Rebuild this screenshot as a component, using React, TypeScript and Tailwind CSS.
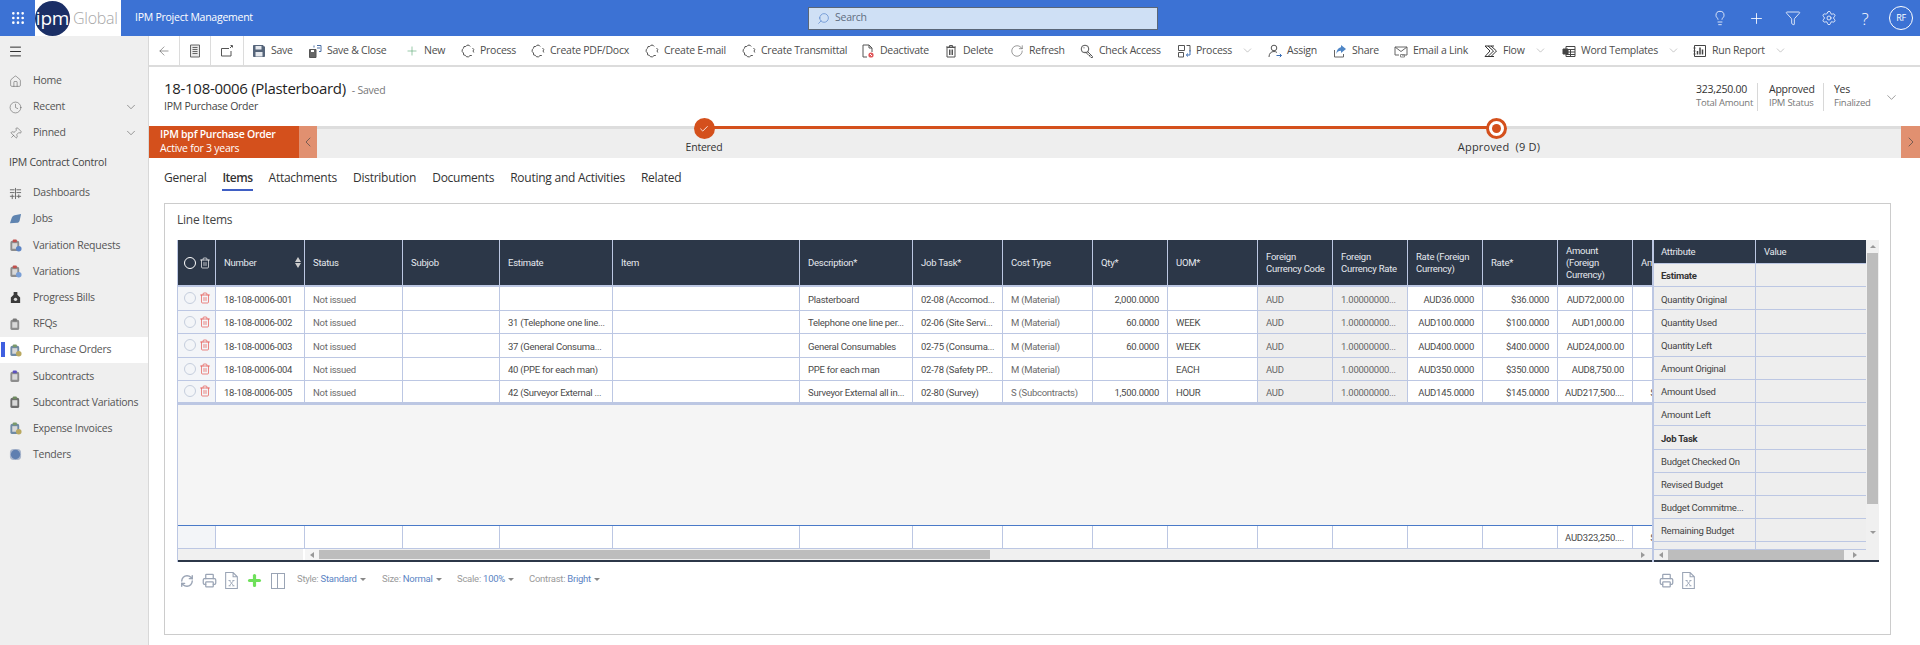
import type { ReactNode } from "react"
import {
  ArrowLeft,
  ChevronDown,
  ChevronLeft,
  ChevronRight,
  Check,
  Clock,
  Filter,
  Home,
  Lightbulb,
  Menu,
  Pin,
  Plus,
  Printer,
  RefreshCw,
  RotateCw,
  Search,
  Settings,
  Trash2,
  Grip,
} from "lucide-react"

const segoe = "[font-family:'Open_Sans',sans-serif]"
const gridFont = "[font-family:'Roboto',sans-serif]"

const Svg = ({ children, className = "" }: { children: ReactNode; className?: string }) => (
  <svg viewBox="0 0 14 14" fill="none" stroke="currentColor" strokeWidth="1" className={`h-[14px] w-[14px] shrink-0 ${className}`}>
    {children}
  </svg>
)

const SaveIcon = () => (
  <Svg className="text-[#56657a]">
    <path d="M1.500 1.500h9.500l1.500 1.500v9.500h-11z" fill="#56657a" />
    <path d="M3.500 2h6v3.500h-6zM3.500 8h7v4.500h-7z" fill="#e6e9ee" stroke="none" />
  </Svg>
)

const ProcessIcon = () => (
  <Svg className="text-[#555]">
    <path d="M9.200 2.500 8 1.200H6L4.800 2.500H3L2.500 4.300 1.200 5.600V7.600L2.500 9V10.800L4.300 11.300 5.600 12.800H7.600L9 11.500H10.800" />
    <path d="M11.500 4 12.800 5.600 12 7 12.800 8.500" />
  </Svg>
)

const SaveCloseIcon = () => (
  <Svg className="text-[#555]">
    <path d="M1.500 5.500h6.500v8h-6.500z" fill="#666" />
    <path d="M3 6h3v2H3z" fill="#fff" stroke="none" />
    <path d="M9 1.500h4v6h-2M9 4h3M6 1.500v2" stroke="#4a6fa5" />
  </Svg>
)

const FormIcon = () => (
  <Svg className="text-[#666]">
    <path d="M2.500 1h9v12h-9z" fill="#e8e8e8" />
    <path d="M4.500 3.500h5M4.500 5.500h5M4.500 7.500h5M4.500 9.500h5" />
  </Svg>
)

const PopoutIcon = () => (
  <Svg className="text-[#555]">
    <path d="M9 4.500H1.500v7.500h9.500V7" />
    <path d="M10 4l2-2M10.500 1.500h2v2" />
  </Svg>
)

const DeactivateIcon = () => (
  <Svg className="text-[#555]">
    <path d="M6 13H2V1h6l3 3v4M8 1v3h3" />
    <circle cx="10" cy="11" r="2.600" fill="#e0565a" stroke="none" />
    <path d="M9 10l2 2" stroke="#fff" />
  </Svg>
)

const BinIcon = () => (
  <Svg className="text-[#555]">
    <path d="M3 3.500h8V13H3zM2 3h10M5.500 3V1.500h3V3M5.500 5.500v5.500M7 5.500v5.500M8.500 5.500v5.500" />
  </Svg>
)

const KeyIcon = () => (
  <Svg className="text-[#555]">
    <circle cx="5" cy="5" r="3.800" />
    <path d="M7.500 7.500l5 5v1h-1.500l-1-1v-1h-1l-3.800-3.800M3.500 3.800h1" />
  </Svg>
)

const SwitchIcon = () => (
  <Svg className="text-[#555]">
    <path d="M1.500 1.500h6v5h-6zM1.500 8.500h5v4.500h-5z" />
    <path d="M9.500 1.500h3.500v6" stroke="#555" />
    <path d="M13 6v5H9.500M11 9.500 9.300 11 11 12.500" stroke="#3d6fb5" />
  </Svg>
)

const AssignIcon = () => (
  <Svg className="text-[#555]">
    <circle cx="6" cy="4" r="2.800" />
    <path d="M1 13c0-3.500 2-5.500 5-5.500 1.200 0 2.200.3 3 1" />
    <path d="M8.500 11.500h5M11.800 9.800l1.700 1.700-1.700 1.700" stroke="#3d6fb5" />
  </Svg>
)

const ShareIcon = () => (
  <Svg className="text-[#666]">
    <path d="M1.500 6v7h9V10" />
    <path d="M8 1l5 4-5 4V6.800C5.500 6.800 4 8 3.500 10 3.500 6 5.500 3.500 8 3.200z" fill="#4f86c6" stroke="none" />
  </Svg>
)

const MailLinkIcon = () => (
  <Svg className="text-[#666]">
    <path d="M1 3h12v8H8M1 3v8h4M1 3l6 4.500L13 3" />
    <path d="M6.500 10.500h4v2.500h-4z" stroke="#888" />
  </Svg>
)

const FlowIcon = () => (
  <Svg className="text-[#333]">
    <path d="M1 2h6l5.500 5L7 12.500H1l5-5.500zM4 2l5.500 5L4 12.500" />
    <path d="M7 2h3M7 12.500h3" />
  </Svg>
)

const WordIcon = () => (
  <Svg className="text-[#444]">
    <path d="M4 2.500h9v10H4zM4 5.500h9M4 8h9M4 10.500h9M8.500 5.500v7" />
    <path d="M1 5h5v5H1z" fill="#444" />
  </Svg>
)

const ReportIcon = () => (
  <Svg className="text-[#444]">
    <path d="M1.500 1.500h11v11h-11z" />
    <path d="M4.500 10.500V7M7 10.500V3.500M9.500 10.500V5.500" strokeWidth="1.500" />
    <path d="M0.500 4h2M0.500 7h2M0.500 10h2" />
  </Svg>
)

const ExcelIcon = () => (
  <svg viewBox="0 0 12 16" fill="none" stroke="#9aa4b5" className="h-[17px] w-[13px]">
    <path d="M.5.5h7l4 4v11H.5zM7.500.5v4h4" />
    <path d="M4 8l4 5M8 8l-4 5M3.200 13h2M6.800 13h2M3.200 8h2M6.800 8h2" strokeWidth=".8" />
  </svg>
)

const tools: { label: string; icon: ReactNode; w: string; caret?: boolean }[] = [
  { label: "Save", icon: <SaveIcon />, w: "w-[56px]" },
  { label: "Save & Close", icon: <SaveCloseIcon />, w: "w-[97px]" },
  { label: "New", icon: <Plus className="h-[14px] w-[14px] shrink-0 text-[#4fa36a]" strokeWidth={1} />, w: "w-[56px]" },
  { label: "Process", icon: <ProcessIcon />, w: "w-[70px]" },
  { label: "Create PDF/Docx", icon: <ProcessIcon />, w: "w-[114px]" },
  { label: "Create E-mail", icon: <ProcessIcon />, w: "w-[97px]" },
  { label: "Create Transmittal", icon: <ProcessIcon />, w: "w-[119px]" },
  { label: "Deactivate", icon: <DeactivateIcon />, w: "w-[83px]" },
  { label: "Delete", icon: <BinIcon />, w: "w-[66px]" },
  { label: "Refresh", icon: <RotateCw className="h-[14px] w-[14px] shrink-0 text-[#555]" strokeWidth={1} />, w: "w-[70px]" },
  { label: "Check Access", icon: <KeyIcon />, w: "w-[97px]" },
  { label: "Process", icon: <SwitchIcon />, w: "w-[91px]", caret: true },
  { label: "Assign", icon: <AssignIcon />, w: "w-[65px]" },
  { label: "Share", icon: <ShareIcon />, w: "w-[61px]" },
  { label: "Email a Link", icon: <MailLinkIcon />, w: "w-[90px]" },
  { label: "Flow", icon: <FlowIcon />, w: "w-[78px]", caret: true },
  { label: "Word Templates", icon: <WordIcon />, w: "w-[131px]", caret: true },
  { label: "Run Report", icon: <ReportIcon />, w: "w-[100px]", caret: true },
]

const Clip = ({ clip = "#c0504d", badge, body = "#8d8d8d" }: { clip?: string; badge?: string; body?: string }) => (
  <svg viewBox="0 0 14 14" className="h-[13px] w-[13px] shrink-0">
    <rect x="1.500" y="2" width="9.500" height="11" rx="2" fill={body} />
    <rect x="3.500" y="4.500" width="5.500" height="6" fill="#d8d8d8" />
    <rect x="4" y="0.500" width="4.500" height="3" rx="1" fill={clip} />
    {badge && <circle cx="10.500" cy="10.500" r="3" fill={badge} />}
  </svg>
)

const navItems: { label: string; icon: ReactNode; active?: boolean }[] = [
  {
    label: "Dashboards",
    icon: (
      <svg viewBox="0 0 14 14" stroke="#666" className="h-[13px] w-[13px] shrink-0">
        <path d="M1 3h5M1 6h5M8 3h5M8 6h5M1 10h5M8 10h5M7 1v12M3.500 8v5M10.500 8v4" />
      </svg>
    ),
  },
  {
    label: "Jobs",
    icon: (
      <svg viewBox="0 0 14 14" className="h-[13px] w-[13px] shrink-0">
        <path d="M1 11 3 5q1-2 3-2.500L13 1l-1.500 7q-.5 2-2 2.500z" fill="#5f84b0" />
      </svg>
    ),
  },
  { label: "Variation Requests", icon: <Clip badge="#5c84c4" /> },
  { label: "Variations", icon: <Clip badge="#7a9fd6" /> },
  {
    label: "Progress Bills",
    icon: (
      <svg viewBox="0 0 14 14" className="h-[13px] w-[13px] shrink-0">
        <path d="M5 1h4v3l3 3v6H2V7l3-3z" fill="#3a3a3a" />
        <circle cx="7" cy="9" r="1.800" fill="#ddd" />
      </svg>
    ),
  },
  { label: "RFQs", icon: <Clip clip="#777" /> },
  { label: "Purchase Orders", icon: <Clip clip="#7a9a6a" badge="#b9a860" body="#6f8aa5" />, active: true },
  { label: "Subcontracts", icon: <Clip clip="#5b50c0" /> },
  { label: "Subcontract Variations", icon: <Clip clip="#6f8a60" body="#6d6d6d" /> },
  { label: "Expense Invoices", icon: <Clip clip="#7a9a6a" badge="#b9a860" body="#6f8aa5" /> },
  {
    label: "Tenders",
    icon: (
      <svg viewBox="0 0 14 14" className="h-[13px] w-[13px] shrink-0">
        <rect x="1" y="1" width="12" height="12" rx="4" fill="#a9b6cc" />
        <circle cx="7" cy="7" r="5" fill="#5f7fb0" />
      </svg>
    ),
  },
]

const gridCols =
  "grid w-max grid-cols-[38px_89px_98px_97px_113px_187px_113px_90px_90px_75px_90px_75px_75px_75px_75px_75px_76px]"

const headers = [
  "Number",
  "Status",
  "Subjob",
  "Estimate",
  "Item",
  "Description*",
  "Job Task*",
  "Cost Type",
  "Qty*",
  "UOM*",
  "Foreign\nCurrency Code",
  "Foreign\nCurrency Rate",
  "Rate (Foreign\nCurrency)",
  "Rate*",
  "Amount\n(Foreign\nCurrency)",
  "Amount",
]

const rows = [
  ["18-108-0006-001", "Not issued", "", "", "", "Plasterboard", "02-08 (Accomod...", "M (Material)", "2,000.0000", "", "AUD", "1.00000000...", "AUD36.0000", "$36.0000", "AUD72,000.00", ""],
  ["18-108-0006-002", "Not issued", "", "31 (Telephone one line...", "", "Telephone one line per...", "02-06 (Site Servi...", "M (Material)", "60.0000", "WEEK", "AUD", "1.00000000...", "AUD100.0000", "$100.0000", "AUD1,000.00", ""],
  ["18-108-0006-003", "Not issued", "", "37 (General Consuma...", "", "General Consumables", "02-75 (Consuma...", "M (Material)", "60.0000", "WEEK", "AUD", "1.00000000...", "AUD400.0000", "$400.0000", "AUD24,000.00", ""],
  ["18-108-0006-004", "Not issued", "", "40 (PPE for each man)", "", "PPE for each man", "02-78 (Safety PP...", "M (Material)", "", "EACH", "AUD", "1.00000000...", "AUD350.0000", "$350.0000", "AUD8,750.00", ""],
  ["18-108-0006-005", "Not issued", "", "42 (Surveyor External ...", "", "Surveyor External all in...", "02-80 (Survey)", "S (Subcontracts)", "1,500.0000", "HOUR", "AUD", "1.00000000...", "AUD145.0000", "$145.0000", "AUD217,500....", "$217,500.00"],
]

const attributes = [
  { label: "Estimate", bold: true },
  { label: "Quantity Original" },
  { label: "Quantity Used" },
  { label: "Quantity Left" },
  { label: "Amount Original" },
  { label: "Amount Used" },
  { label: "Amount Left" },
  { label: "Job Task", bold: true },
  { label: "Budget Checked On" },
  { label: "Revised Budget" },
  { label: "Budget Commitme..." },
  { label: "Remaining Budget" },
]

const cellAlign = (i: number) => (i === 8 || (i >= 12 && i <= 15) ? "justify-end text-right" : "")
const cellTone = (i: number) => {
  if (i === 1 || i === 7) return "text-[#6b6b6b]"
  if (i === 10 || i === 11) return "bg-[#eeeeee] text-[#666]"
  return "text-[#4a4a4a]"
}

const Caret = () => <span className="ml-[3px] inline-block h-0 w-0 border-x-[3px] border-t-[3px] border-x-transparent border-t-[#888] align-middle" />

const ToolOption = ({ label, value, w }: { label: string; value: string; w: string }) => (
  <span className={`${w} shrink-0 whitespace-nowrap text-[#9a9a9a]`}>
    {label} <span className="text-[#5b84c4]">{value}</span>
    <Caret />
  </span>
)

const ArrowTiny = ({ dir }: { dir: "l" | "r" }) =>
  dir === "l" ? (
    <span className="h-0 w-0 border-y-[3px] border-r-[4px] border-y-transparent border-r-[#999]" />
  ) : (
    <span className="h-0 w-0 border-y-[3px] border-l-[4px] border-y-transparent border-l-[#999]" />
  )

function LineItemsGrid() {
  return (
    <div className={`mx-[12px] flex h-[322px] ${gridFont} text-[9.5px] leading-none`}>
      {/* main grid */}
      <div className="flex w-[1475px] shrink-0 flex-col overflow-hidden border-l border-[#bcc7e3] bg-[#f5f5f5]">
        <div className={`${gridCols} h-[47px] shrink-0 bg-[#2c3748] text-[#e6e9ef]`}>
          <div className="flex items-center gap-[3px] border-r border-b-2 border-[#bcc7e3] pl-[6px] pt-px">
            <span className="h-[12px] w-[12px] rounded-full border border-white" />
            <Trash2 className="h-[12px] w-[12px] text-white" strokeWidth={1.4} />
          </div>
          {headers.map((h, i) => (
            <div key={h} className="relative flex items-center border-r border-b-2 border-[#bcc7e3] px-[8px] leading-[12px]">
              <span className="whitespace-pre">{h}</span>
              {i === 0 && (
                <span className="absolute right-[3px] flex flex-col gap-px">
                  <span className="h-0 w-0 border-x-[3px] border-b-[5px] border-x-transparent border-b-[#ccc]" />
                  <span className="h-0 w-0 border-x-[3px] border-t-[5px] border-x-transparent border-t-[#ccc]" />
                </span>
              )}
            </div>
          ))}
        </div>

        {rows.map((row, r) => (
          <div key={r} className={`${gridCols} h-[23.5px] shrink-0 bg-white ${r === 4 ? "border-b-2 border-[#bcc7e3]" : ""}`}>
            <div className="flex items-center gap-[3px] border-r border-b border-[#bcc7e3] bg-[#f3f5f8] pl-[6px]">
              <span className="h-[12px] w-[12px] rounded-full border border-[#c5cedd]" />
              <Trash2 className="h-[12px] w-[12px] text-[#e5554f]" strokeWidth={1.4} />
            </div>
            {row.map((cell, i) => (
              <div key={i} className={`flex items-center whitespace-nowrap border-r border-b border-[#bcc7e3] px-[8px] pt-[2px] ${cellAlign(i)} ${cellTone(i)}`}>
                {cell}
              </div>
            ))}
          </div>
        ))}

        <div className="min-h-0 flex-1" />

        <div className={`${gridCols} h-[24px] shrink-0 border-t border-[#4a7ac8] bg-white`}>
          {Array.from({ length: 17 }).map((_, i) => (
            <div
              key={i}
              className={`flex items-center justify-end whitespace-nowrap border-r border-b border-[#bcc7e3] px-[8px] pt-[2px] text-[#4a4a4a] ${i === 0 ? "bg-[#f3f5f8]" : ""}`}
            >
              {i === 15 ? "AUD323,250...." : i === 16 ? "$323,250.00" : ""}
            </div>
          ))}
        </div>

        <div className="flex h-[13px] shrink-0 items-stretch border-b-2 border-[#2c3748] bg-[#f0f0f0]">
          <div className="w-[127px] shrink-0 border-r-2 border-white" />
          <div className="flex w-[14px] shrink-0 items-center justify-center bg-[#f5f5f5]">
            <ArrowTiny dir="l" />
          </div>
          <div className="my-px w-[671px] shrink-0 bg-[#bdbdbd]" />
          <div className="flex flex-1 items-center justify-end pr-[7px]">
            <ArrowTiny dir="r" />
          </div>
        </div>
      </div>

      {/* attribute panel */}
      <div className="flex w-[214px] shrink-0 flex-col overflow-hidden border-l-2 border-[#bcc7e3] bg-[#eeeeee] text-[#444]">
        <div className="grid h-[23px] shrink-0 grid-cols-[102px_1fr] bg-[#2c3748] text-[#e6e9ef]">
          <div className="flex items-center border-r border-[#bcc7e3] px-[7px]">Attribute</div>
          <div className="flex items-center px-[8px]">Value</div>
        </div>
        <div className="min-h-0 flex-1 overflow-hidden border-t border-[#bcc7e3]">
          {attributes.map((a) => (
            <div key={a.label} className="grid h-[23.2px] grid-cols-[102px_1fr] border-b border-[#bcc7e3]">
              <div className={`flex items-center whitespace-nowrap border-r border-[#bcc7e3] px-[7px] pt-[2px] ${a.bold ? "font-bold text-[#333]" : ""}`}>{a.label}</div>
              <div />
            </div>
          ))}
          <div className="grid h-[23px] grid-cols-[102px_1fr]">
            <div className="border-r border-[#bcc7e3]" />
          </div>
        </div>
        <div className="flex h-[13px] shrink-0 items-stretch border-t border-[#bcc7e3] border-b-2 border-b-[#2c3748] bg-[#f0f0f0]">
          <div className="flex w-[14px] shrink-0 items-center justify-center">
            <ArrowTiny dir="l" />
          </div>
          <div className="w-[176px] shrink-0 bg-[#bdbdbd]" />
          <div className="flex flex-1 items-center justify-center">
            <ArrowTiny dir="r" />
          </div>
        </div>
      </div>

      {/* vertical scroll */}
      <div className="flex w-[13px] shrink-0 flex-col items-center border-b-2 border-[#2c3748] bg-[#f0f0f0]">
        <div className="flex h-[13px] shrink-0 items-center">
          <span className="h-0 w-0 border-x-[3px] border-b-[3px] border-x-transparent border-b-[#999]" />
        </div>
        <div className="h-[251px] w-[11px] shrink-0 bg-[#bdbdbd]" />
        <div className="flex flex-1 items-center">
          <span className="h-0 w-0 border-x-[3px] border-t-[3px] border-x-transparent border-t-[#999]" />
        </div>
      </div>
    </div>
  )
}

export default function App() {
  return (
    <div className={`flex h-screen w-full flex-col overflow-hidden bg-white text-[10.5px] tracking-[-0.25px] text-[#333] ${segoe}`}>
      {/* Top bar */}
      <header className="flex h-[36px] shrink-0 items-center bg-[#3c72d4] text-white">
        <div className="flex w-[35px] shrink-0 justify-center">
          <Grip className="h-[16px] w-[16px]" strokeWidth={2} />
        </div>
        <div className="flex h-full w-[86px] shrink-0 items-center overflow-hidden bg-white">
          <div className="flex h-[35px] w-[35px] shrink-0 items-center justify-center rounded-full bg-[#1b2f66] text-[19px] leading-none text-white">
            ipm
          </div>
          <span className="ml-[3px] text-[16px] font-light leading-none text-[#a8a8a8]">Global</span>
        </div>
        <span className="ml-[14px] w-[673px] shrink-0">IPM Project Management</span>
        <div className="flex h-[23px] w-[350px] shrink-0 items-center gap-[5px] border border-[#5a6678] bg-[#cfe0f5] pl-[8px] text-[#5f6d80]">
          <Search className="h-[13px] w-[13px] -scale-x-100 text-[#4f7ec9]" strokeWidth={1.2} />
          <span>Search</span>
        </div>
        <div className="ml-auto flex items-center gap-[20px] pr-[7px]">
          <Lightbulb className="h-[16px] w-[16px]" strokeWidth={1.2} />
          <Plus className="h-[17px] w-[17px]" strokeWidth={1.2} />
          <Filter className="h-[16px] w-[16px]" strokeWidth={1.2} />
          <Settings className="h-[16px] w-[16px]" strokeWidth={1.2} />
          <span className="w-[16px] text-center text-[17px] font-light leading-none">?</span>
          <span className="-ml-[4px] flex h-[24px] w-[24px] items-center justify-center rounded-full border border-white text-[9px]">RF</span>
        </div>
      </header>

      <div className="flex min-h-0 flex-1">
        {/* Sidebar */}
        <aside className="flex w-[149px] shrink-0 flex-col whitespace-nowrap border-r border-[#d8d8d8] bg-[#efefef] text-[#555]">
          <div className="flex h-[31px] shrink-0 items-center pl-[8px]">
            <Menu className="h-[15px] w-[15px] text-[#222]" strokeWidth={1.5} />
          </div>
          <div className="flex flex-col pt-[1px]">
            <div className="flex h-[26px] items-center gap-[11px] pl-[9px]">
              <Home className="h-[13px] w-[13px] shrink-0" strokeWidth={1} />
              Home
            </div>
            <div className="flex h-[26px] items-center gap-[11px] pl-[9px]">
              <Clock className="h-[13px] w-[13px] shrink-0" strokeWidth={1} />
              Recent
              <ChevronDown className="ml-auto mr-[10px] h-[14px] w-[14px]" strokeWidth={1} />
            </div>
            <div className="flex h-[26px] items-center gap-[11px] pl-[9px]">
              <Pin className="h-[13px] w-[13px] shrink-0 rotate-45" strokeWidth={1} />
              Pinned
              <ChevronDown className="ml-auto mr-[10px] h-[14px] w-[14px]" strokeWidth={1} />
            </div>
          </div>
          <div className="flex h-[33px] items-center pl-[9px] text-[#444]">IPM Contract Control</div>
          <div className="flex flex-col pt-[1px]">
            {navItems.map((n) => (
              <div key={n.label} className={`relative flex h-[26.2px] items-center gap-[11px] pl-[9px] ${n.active ? "bg-white" : ""}`}>
                {n.active && <span className="absolute left-[1px] top-[5px] h-[15px] w-[4px] bg-[#3f5fe0]" />}
                {n.icon}
                {n.label}
              </div>
            ))}
          </div>
        </aside>

        <main className="flex min-w-0 flex-1 flex-col">
          {/* Command bar */}
          <div className="flex h-[31px] shrink-0 items-center border-b-2 border-[#dcdcdc]">
            <div className="flex h-full w-[31px] shrink-0 items-center justify-center border-r border-[#dcdcdc]">
              <ArrowLeft className="h-[14px] w-[14px] text-[#555]" strokeWidth={1} />
            </div>
            <div className="flex h-full w-[31px] shrink-0 items-center justify-center border-r border-[#dcdcdc]">
              <FormIcon />
            </div>
            <div className="flex h-full w-[33px] shrink-0 items-center justify-center border-r border-[#dcdcdc]">
              <PopoutIcon />
            </div>
            <div className="flex pl-[8px]">
              {tools.map((t, i) => (
                <div key={i} className={`flex shrink-0 items-center gap-[5px] whitespace-nowrap text-[#4d4d4d] ${t.w}`}>
                  {t.icon}
                  <span>{t.label}</span>
                  {t.caret && <ChevronDown className="ml-[4px] h-[13px] w-[13px] text-[#999]" strokeWidth={1} />}
                </div>
              ))}
            </div>
          </div>

          {/* Record header */}
          <div className="flex h-[59px] shrink-0 items-start justify-between pl-[15px] pr-[21px] pt-[12px]">
            <div>
              <div className="flex items-baseline gap-[6px]">
                <span className="text-[15px] font-medium leading-[18px] tracking-[-0.3px] text-[#1f1f1f]">18-108-0006 (Plasterboard)</span>
                <span className="text-[#777]">- Saved</span>
              </div>
              <div className="-mt-[1px] leading-[16px] text-[#444]">IPM Purchase Order</div>
            </div>
            <div className="flex items-center whitespace-nowrap pt-[4px]">
              <div className="w-[62px] border-r border-[#d8d8d8]">
                <div className="leading-[12px] text-[#333]">323,250.00</div>
                <div className="text-[9.5px] leading-[16px] text-[#777]">Total Amount</div>
              </div>
              <div className="w-[66px] border-r border-[#d8d8d8] pl-[11px]">
                <div className="font-medium leading-[12px] text-[#333]">Approved</div>
                <div className="text-[9.5px] leading-[16px] text-[#777]">IPM Status</div>
              </div>
              <div className="w-[60px] pl-[10px]">
                <div className="font-medium leading-[12px] text-[#333]">Yes</div>
                <div className="text-[9.5px] leading-[16px] text-[#777]">Finalized</div>
              </div>
              <ChevronDown className="h-[15px] w-[15px] text-[#666]" strokeWidth={1} />
            </div>
          </div>

          {/* Business process flow */}
          <div className="flex h-[32px] shrink-0">
            <div className="flex w-[150px] shrink-0 flex-col justify-center whitespace-nowrap bg-[#d4501c] pb-[2px] pl-[11px] leading-[14px] text-white">
              <span className="font-semibold">IPM bpf Purchase Order</span>
              <span>Active for 3 years</span>
            </div>
            <div className="flex w-[18px] shrink-0 items-center justify-center bg-[#e19070]">
              <ChevronLeft className="h-[16px] w-[16px] text-[#444]" strokeWidth={1} />
            </div>
            <div className="relative flex flex-1 border-t-[3px] border-[#dddddd] bg-[#eeeeee]">
              <span className="absolute left-[387px] top-[-3px] h-[3px] w-[792px] bg-[#d4501c]" />
              <div className="relative ml-[337px] flex w-[100px] flex-col items-center -mt-[11px]">
                <span className="flex h-[21px] w-[21px] items-center justify-center rounded-full bg-[#d4501c]">
                  <Check className="h-[10px] w-[10px] text-white" strokeWidth={2} />
                </span>
                <span className="leading-[16px] text-[#333]">Entered</span>
              </div>
              <div className="relative ml-[692px] flex w-[100px] flex-col items-center -mt-[11px]">
                <span className="flex h-[21px] w-[21px] items-center justify-center rounded-full border-[3px] border-[#d4501c] bg-white">
                  <span className="h-[9px] w-[9px] rounded-full bg-[#d4501c]" />
                </span>
                <span className="whitespace-nowrap pl-[6px] text-[11px] leading-[16px] tracking-[0.2px] text-[#333]">Approved&nbsp; (9 D)</span>
              </div>
            </div>
            <div className="flex w-[19px] shrink-0 items-center justify-center bg-[#e19070]">
              <ChevronRight className="h-[16px] w-[16px] text-[#444]" strokeWidth={1} />
            </div>
          </div>

          {/* Tabs */}
          <nav className="flex h-[45px] shrink-0 items-start gap-[16px] pl-[15px] pt-[12px] text-[12px] text-[#333]">
            <span className="leading-[16px]">General</span>
            <span className="border-b-2 border-[#3f5fc4] pb-[3px] font-semibold leading-[16px] tracking-[-0.5px]">Items</span>
            <span className="leading-[16px]">Attachments</span>
            <span className="leading-[16px]">Distribution</span>
            <span className="leading-[16px]">Documents</span>
            <span className="leading-[16px]">Routing and Activities</span>
            <span className="leading-[16px]">Related</span>
          </nav>

          {/* Line items card */}
          <section className="mb-[10px] ml-[15px] mr-[29px] flex min-h-0 flex-1 flex-col border border-[#cccccc]">
            <h2 className="flex h-[36px] shrink-0 items-center pl-[12px] pb-[4px] text-[12px] font-normal text-[#444]">Line Items</h2>
            <LineItemsGrid />
            <div className={`mx-[12px] flex flex-1 items-start pt-[10px] ${gridFont} text-[9.5px]`}>
              <div className="flex w-[120px] shrink-0 items-center gap-[8px] pl-[3px]">
                <RefreshCw className="h-[14px] w-[14px] text-[#9aa4b5]" strokeWidth={2.4} />
                <Printer className="h-[15px] w-[15px] text-[#9aa4b5]" strokeWidth={2} />
                <ExcelIcon />
                <Plus className="h-[17px] w-[17px] text-[#6ee05a]" strokeWidth={4.5} />
                <span className="flex h-[16px] w-[14px] border border-[#9aa4b5]">
                  <span className="w-1/2 border-r border-[#9aa4b5]" />
                </span>
              </div>
              <ToolOption label="Style:" value="Standard" w="w-[85px]" />
              <ToolOption label="Size:" value="Normal" w="w-[75px]" />
              <ToolOption label="Scale:" value="100%" w="w-[72px]" />
              <ToolOption label="Contrast:" value="Bright" w="w-[1128px]" />
              <div className="flex items-center gap-[8px] pl-[2px]">
                <Printer className="h-[15px] w-[15px] text-[#9aa4b5]" strokeWidth={2} />
                <ExcelIcon />
              </div>
            </div>
          </section>
        </main>
      </div>
    </div>
  )
}
